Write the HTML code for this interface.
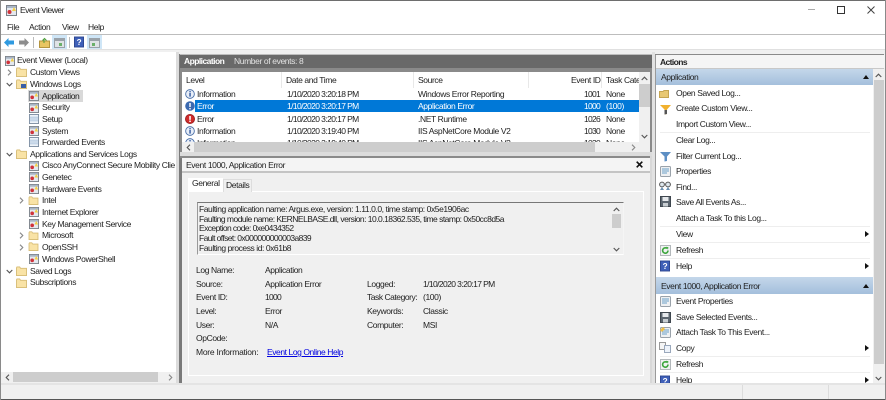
<!DOCTYPE html>
<html><head><meta charset="utf-8"><style>
html,body{margin:0;padding:0;width:886px;height:400px;overflow:hidden;background:#f0f0f0}
body{position:relative;font-family:"Liberation Sans",sans-serif;font-size:8.5px;letter-spacing:-.38px;color:#222}
.t{position:absolute;white-space:nowrap;line-height:12px;height:12px}
.n{letter-spacing:-.6px}
.i{letter-spacing:-.72px}
.b{position:absolute}
svg{position:absolute;overflow:visible}
</style></head><body>
<svg width="0" height="0" style="position:absolute"><defs>
<symbol id="log" viewBox="0 0 11 11"><rect x=".5" y=".5" width="10" height="10" fill="#e4e8ee" stroke="#7b8088"/><rect x="1" y="1" width="9" height="2" fill="#a9b6c6"/><circle cx="3.5" cy="7" r="2" fill="#d0323a"/><path d="M6 6l2-4 2 4z" fill="#f3cf45"/></symbol>
<symbol id="logp" viewBox="0 0 11 11"><rect x=".5" y=".5" width="10" height="10" fill="#eef3f9" stroke="#7b8ca0"/><path d="M1 3.5h9M1 5.5h9M1 7.5h9" stroke="#a8c0da"/></symbol>
<symbol id="fold" viewBox="0 0 12 11"><path d="M.5 2V10.5H11.5V2.5H5L4 1H1z" fill="#f9e3a6" stroke="#d6bb74"/></symbol>
<symbol id="info" viewBox="0 0 11 11"><circle cx="5.5" cy="5.5" r="4.8" fill="#e8eef8" stroke="#4a6fa8"/><rect x="4.8" y="4.4" width="1.5" height="4" fill="#28509a"/><rect x="4.8" y="2.3" width="1.5" height="1.4" fill="#28509a"/></symbol>
<symbol id="err" viewBox="0 0 11 11"><circle cx="5.5" cy="5.5" r="5" fill="#cf2b2b" stroke="#9e2222"/><rect x="4.7" y="2.2" width="1.7" height="4.2" fill="#fff"/><rect x="4.7" y="7.2" width="1.7" height="1.6" fill="#fff"/></symbol>
<symbol id="help" viewBox="0 0 11 12"><rect x=".5" y=".5" width="10" height="11" fill="#3f60b8" stroke="#2c4690"/><text x="5.5" y="9.2" font-size="9" font-weight="bold" text-anchor="middle" fill="#fff" font-family="Liberation Sans">?</text></symbol>
<symbol id="ref" viewBox="0 0 11 11"><rect x=".5" y=".5" width="10" height="10" fill="#f0f2f2" stroke="#b3b8bb"/><path d="M8 5.5a2.7 2.7 0 1 1-1-2.1" fill="none" stroke="#3aa53a" stroke-width="1.6"/><path d="M6 1.8l2.4.4-.4 2.4z" fill="#3aa53a"/></symbol>
<symbol id="funnel" viewBox="0 0 11 11"><path d="M0 1h11L7 5.5V10L4.5 10.5V5.5z" fill="currentColor"/></symbol>
<symbol id="prop" viewBox="0 0 11 11"><rect x=".5" y=".5" width="10" height="10" rx="1" fill="#eef0f2" stroke="#9aa2aa"/><path d="M2 3h7M2 5h7M2 7h5" stroke="#6aa0c8"/></symbol>
<symbol id="save" viewBox="0 0 11 11"><path d="M.5.5H10.5V10.5H.5z" fill="#5c6670" stroke="#3e464e"/><rect x="2.5" y="1" width="6" height="4" fill="#e6e9ec"/><rect x="3" y="7" width="5" height="3.5" fill="#c8ced2"/></symbol>
<symbol id="upa" viewBox="0 0 7 5"><path d="M.7 4L3.5 1.2 6.3 4" fill="none" stroke="#555" stroke-width="1.1"/></symbol>
<symbol id="dna" viewBox="0 0 7 5"><path d="M.7 1L3.5 3.8 6.3 1" fill="none" stroke="#555" stroke-width="1.1"/></symbol>
<symbol id="rta" viewBox="0 0 5 7"><path d="M1 .7L3.8 3.5 1 6.3" fill="none" stroke="#888" stroke-width="1.1"/></symbol>
<symbol id="lfa" viewBox="0 0 5 7"><path d="M4 .7L1.2 3.5 4 6.3" fill="none" stroke="#555" stroke-width="1.1"/></symbol>
</defs></svg>

<!-- window frame / title -->
<div class="b" style="left:0;top:0;width:886px;height:34px;background:#fff"></div>
<div class="b" style="left:0;top:0;width:886px;height:1px;background:#6e6e6e"></div>
<svg style="left:6px;top:5px" width="11" height="11"><use href="#log"/></svg>
<div class="t" style="left:20px;top:4px;letter-spacing:-.5px">Event Viewer</div>
<div class="b" style="left:808px;top:9px;width:7px;height:1px;background:#aaa"></div>
<div class="b" style="left:837px;top:6px;width:6px;height:6px;border:1px solid #333"></div>
<svg style="left:867px;top:6px" width="8" height="8"><path d="M.5.5L7.5 7.5M7.5.5L.5 7.5" stroke="#444"/></svg>
<div class="t" style="left:7px;top:21px">File</div>
<div class="t" style="left:29px;top:21px">Action</div>
<div class="t" style="left:62px;top:21px">View</div>
<div class="t" style="left:88px;top:21px">Help</div>
<div class="b" style="left:0;top:34px;width:886px;height:1px;background:#bdbdbd"></div>
<!-- toolbar -->
<div class="b" style="left:0;top:35px;width:886px;height:15px;background:#fff"></div>
<div class="b" style="left:0;top:49px;width:886px;height:1px;background:#e0e0e0"></div>
<svg style="left:4px;top:38px" width="10" height="9"><path d="M0 4.5L4.5 0V2.5H10V6.5H4.5V9z" fill="#2f9ae0"/></svg>
<svg style="left:19px;top:38px" width="10" height="9"><path d="M10 4.5L5.5 0V2.5H0V6.5H5.5V9z" fill="#8d8d8d"/></svg>
<div class="b" style="left:33px;top:37px;width:1px;height:11px;background:#bbb"></div>
<svg style="left:39px;top:38px" width="11" height="10"><path d="M.5 3V9.5H10.5V3z" fill="#e8c562" stroke="#b5953f"/><path d="M5 5V1M3.5 2.5L5.5 .5 7.5 2.5" stroke="#4d9e3a" fill="none"/></svg>
<div class="b" style="left:52px;top:35px;width:15px;height:14px;background:#cfe6f7"></div>
<svg style="left:54px;top:38px" width="11" height="10"><rect x=".5" y=".5" width="10" height="9" fill="#dfe3e6" stroke="#9aa2a9"/><rect x="1" y="1" width="9" height="2" fill="#9aa2a9"/><rect x="5" y="5" width="3" height="3" fill="#6ab06a"/></svg>
<div class="b" style="left:69px;top:37px;width:1px;height:11px;background:#bbb"></div>
<svg style="left:74px;top:36px" width="10" height="12"><use href="#help"/></svg>
<div class="b" style="left:87px;top:35px;width:15px;height:14px;background:#cfe6f7"></div>
<svg style="left:89px;top:38px" width="11" height="10"><rect x=".5" y=".5" width="10" height="9" fill="#dfe3e6" stroke="#9aa2a9"/><rect x="1" y="1" width="9" height="2" fill="#9aa2a9"/><rect x="3" y="5" width="3" height="3" fill="#6ab06a"/></svg>

<!-- left pane -->
<div class="b" style="left:1px;top:52px;width:175px;height:331px;background:#fff"></div>
<div class="b" style="left:0;top:51px;width:1px;height:333px;background:#8a8a8a"></div>
<div class="b" style="left:176px;top:52px;width:3px;height:332px;background:#dcdcdc"></div>
<div class="b" style="left:179px;top:54px;width:2px;height:330px;background:#7a7a7a"></div>
<svg style="left:5px;top:56px" width="10" height="10"><use href="#log"/></svg>
<div class="t" style="left:17px;top:54px">Event Viewer (Local)</div>

<svg style="left:7px;top:69px" width="5" height="7"><use href="#rta"/></svg>
<svg style="left:16px;top:67px" width="11" height="10"><use href="#fold"/></svg><div class="t" style="left:30px;top:66px">Custom Views</div>
<svg style="left:6px;top:82px" width="7" height="5"><use href="#dna"/></svg>
<svg style="left:16px;top:79px" width="11" height="10"><use href="#fold"/></svg><div class="b" style="left:21px;top:84px;width:5px;height:4px;background:#3a5fa8"></div><div class="t" style="left:30px;top:78px">Windows Logs</div>

<div class="b" style="left:28px;top:90px;width:55px;height:12px;background:#d9d9d9"></div>
<svg style="left:29px;top:91px" width="10" height="10"><use href="#log"/></svg><div class="t" style="left:42px;top:90px">Application</div>
<svg style="left:29px;top:103px" width="10" height="10"><use href="#log"/></svg><div class="t" style="left:42px;top:101px">Security</div>
<svg style="left:29px;top:114px" width="10" height="10"><use href="#logp"/></svg><div class="t" style="left:42px;top:113px">Setup</div>
<svg style="left:29px;top:126px" width="10" height="10"><use href="#log"/></svg><div class="t" style="left:42px;top:125px">System</div>
<svg style="left:29px;top:137px" width="10" height="10"><use href="#logp"/></svg><div class="t" style="left:42px;top:136px">Forwarded Events</div>
<svg style="left:6px;top:152px" width="7" height="5"><use href="#dna"/></svg>
<svg style="left:16px;top:149px" width="11" height="10"><use href="#fold"/></svg><div class="t" style="left:30px;top:148px">Applications and Services Logs</div>
<svg style="left:29px;top:161px" width="10" height="10"><use href="#log"/></svg><div class="t" style="left:42px;top:159px;width:133px;overflow:hidden">Cisco AnyConnect Secure Mobility Client</div>
<svg style="left:29px;top:172px" width="10" height="10"><use href="#log"/></svg><div class="t" style="left:42px;top:171px">Genetec</div>
<svg style="left:29px;top:184px" width="10" height="10"><use href="#log"/></svg><div class="t" style="left:42px;top:183px">Hardware Events</div>
<svg style="left:19px;top:197px" width="5" height="7"><use href="#rta"/></svg>
<svg style="left:28px;top:196px" width="11" height="9"><use href="#fold"/></svg><div class="t" style="left:42px;top:194px">Intel</div>
<svg style="left:29px;top:207px" width="10" height="10"><use href="#log"/></svg><div class="t" style="left:42px;top:206px">Internet Explorer</div>
<svg style="left:29px;top:219px" width="10" height="10"><use href="#log"/></svg><div class="t" style="left:42px;top:218px">Key Management Service</div>
<svg style="left:19px;top:232px" width="5" height="7"><use href="#rta"/></svg>
<svg style="left:28px;top:231px" width="11" height="9"><use href="#fold"/></svg><div class="t" style="left:42px;top:229px">Microsoft</div>
<svg style="left:19px;top:244px" width="5" height="7"><use href="#rta"/></svg>
<svg style="left:28px;top:242px" width="11" height="9"><use href="#fold"/></svg><div class="t" style="left:42px;top:241px">OpenSSH</div>
<svg style="left:29px;top:254px" width="10" height="10"><use href="#log"/></svg><div class="t" style="left:42px;top:253px">Windows PowerShell</div>
<svg style="left:6px;top:269px" width="7" height="5"><use href="#dna"/></svg>
<svg style="left:16px;top:266px" width="11" height="10"><use href="#fold"/></svg><div class="t" style="left:30px;top:265px">Saved Logs</div>
<svg style="left:16px;top:278px" width="11" height="10"><use href="#fold"/></svg><div class="t" style="left:30px;top:276px">Subscriptions</div>
<!-- left h-scroll -->
<div class="b" style="left:1px;top:372px;width:175px;height:11px;background:#f0f0f0"></div>
<div class="b" style="left:13px;top:372px;width:145px;height:10px;background:#cdcdcd"></div>
<svg style="left:5px;top:374px" width="5" height="7"><use href="#lfa"/></svg>
<svg style="left:168px;top:374px" width="5" height="7"><use href="#rta"/></svg>

<!-- centre -->
<div class="b" style="left:180px;top:54px;width:472px;height:1px;background:#bdbdbd"></div>
<div class="b" style="left:180px;top:55px;width:472px;height:13px;background:#696969"></div>
<div class="t" style="left:184px;top:55px;color:#fff;font-weight:bold;letter-spacing:-.55px">Application</div>
<div class="t" style="left:234px;top:55px;color:#e2e2e2">Number of events: 8</div>
<div class="b" style="left:180px;top:68px;width:472px;height:84px;background:#8a8a8a"></div>
<div class="b" style="left:182px;top:72px;width:468px;height:70px;background:#fff"></div>
<div class="b" style="left:281px;top:72px;width:1px;height:16px;background:#e8e8e8"></div>
<div class="b" style="left:413px;top:72px;width:1px;height:16px;background:#e8e8e8"></div>
<div class="b" style="left:528px;top:72px;width:1px;height:16px;background:#e8e8e8"></div>
<div class="b" style="left:601px;top:72px;width:1px;height:16px;background:#e8e8e8"></div>
<div class="t" style="left:186px;top:74px">Level</div>
<div class="t" style="left:286px;top:74px">Date and Time</div>
<div class="t" style="left:418px;top:74px">Source</div>
<div class="t" style="left:571px;top:74px">Event ID</div>
<div class="t" style="left:606px;top:74px;width:33px;overflow:hidden">Task Category</div>
<!-- rows -->
<svg style="left:185px;top:89px" width="10" height="10"><use href="#info"/></svg>
<div class="t" style="left:197px;top:88px">Information</div><div class="t n" style="left:287px;top:88px">1/10/2020 3:20:18 PM</div><div class="t" style="left:418px;top:88px">Windows Error Reporting</div><div class="t i" style="left:584px;top:88px">1001</div><div class="t" style="left:606px;top:88px">None</div>
<div class="b" style="left:195px;top:100px;width:444px;height:12px;background:#0078d7"></div>
<svg style="left:185px;top:101px" width="10" height="10"><circle cx="5" cy="5" r="4.8" fill="#3b69b0"/><rect x="4.2" y="2" width="1.6" height="4" fill="#e8eef8"/><rect x="4.2" y="7" width="1.6" height="1.4" fill="#e8eef8"/></svg>
<div class="t" style="left:197px;top:100px;color:#fff">Error</div><div class="t n" style="left:287px;top:100px;color:#fff">1/10/2020 3:20:17 PM</div><div class="t" style="left:418px;top:100px;color:#fff">Application Error</div><div class="t i" style="left:584px;top:100px;color:#fff">1000</div><div class="t" style="left:606px;top:100px;color:#fff">(100)</div>
<svg style="left:185px;top:114px" width="10" height="10"><use href="#err"/></svg>
<div class="t" style="left:197px;top:113px">Error</div><div class="t n" style="left:287px;top:113px">1/10/2020 3:20:17 PM</div><div class="t" style="left:418px;top:113px">.NET Runtime</div><div class="t i" style="left:584px;top:113px">1026</div><div class="t" style="left:606px;top:113px">None</div>
<svg style="left:185px;top:126px" width="10" height="10"><use href="#info"/></svg>
<div class="t" style="left:197px;top:125px">Information</div><div class="t n" style="left:287px;top:125px">1/10/2020 3:19:40 PM</div><div class="t" style="left:418px;top:125px">IIS AspNetCore Module V2</div><div class="t i" style="left:584px;top:125px">1030</div><div class="t" style="left:606px;top:125px">None</div>
<div class="b" style="left:182px;top:137px;width:457px;height:5px;overflow:hidden">
<svg style="left:3px;top:1px" width="10" height="10"><use href="#info"/></svg>
<div class="t" style="left:15px;top:0">Information</div><div class="t n" style="left:105px;top:0">1/10/2020 3:19:40 PM</div><div class="t" style="left:236px;top:0">IIS AspNetCore Module V2</div><div class="t i" style="left:402px;top:0">1030</div><div class="t" style="left:424px;top:0">None</div></div>
<!-- list scrollbars -->
<div class="b" style="left:639px;top:72px;width:11px;height:70px;background:#f0f0f0"></div>
<div class="b" style="left:639px;top:84px;width:11px;height:23px;background:#cdcdcd"></div>
<svg style="left:641px;top:76px" width="7" height="5"><use href="#upa"/></svg>
<svg style="left:641px;top:134px" width="7" height="5"><use href="#dna"/></svg>
<div class="b" style="left:182px;top:142px;width:468px;height:10px;background:#f0f0f0"></div>
<div class="b" style="left:194px;top:142px;width:401px;height:10px;background:#cdcdcd"></div>
<svg style="left:186px;top:144px" width="5" height="7"><use href="#lfa"/></svg>
<svg style="left:631px;top:144px" width="5" height="7"><use href="#rta"/></svg>
<!-- details -->
<div class="b" style="left:180px;top:152px;width:472px;height:5px;background:#dcdcdc"></div>
<div class="b" style="left:180px;top:156px;width:472px;height:228px;background:#f0f0f0"></div>
<div class="b" style="left:180px;top:156px;width:2px;height:228px;background:#7a7a7a"></div>
<div class="b" style="left:180px;top:156px;width:472px;height:2px;background:#8a8a8a"></div>
<div class="b" style="left:182px;top:158px;width:470px;height:13px;background:#f4f4f4"></div>
<div class="b" style="left:182px;top:171px;width:470px;height:2px;background:#c4c4c4"></div>
<div class="t" style="left:186px;top:159px">Event 1000, Application Error</div>
<svg style="left:636px;top:161px" width="7" height="7"><path d="M.7.7L6.3 6.3M6.3.7L.7 6.3" stroke="#111" stroke-width="1.6"/></svg>
<div class="b" style="left:650px;top:156px;width:2px;height:228px;background:#d8d8d8"></div>
<!-- tab panel -->
<div class="b" style="left:188px;top:191px;width:454px;height:183px;background:#f0f0f0;border:1px solid #fff"></div>
<div class="b" style="left:188px;top:178px;width:35px;height:14px;background:#fff"></div>
<div class="b" style="left:223px;top:179px;width:29px;height:13px;background:#f0f0f0;border:1px solid #ddd;border-bottom:0;box-sizing:border-box"></div>
<div class="t" style="left:192px;top:177px">General</div>
<div class="t" style="left:226px;top:179px">Details</div>
<!-- message box -->
<div class="b" style="left:197px;top:202px;width:425px;height:51px;background:#f0f0f0;border-top:1px solid #777;border-left:1px solid #999;border-bottom:1px solid #fff;border-right:1px solid #f5f5f5"></div>
<div class="t" style="left:199px;top:203px;letter-spacing:-.43px">Faulting application name: Argus.exe, version: 1.11.0.0, time stamp: 0x5e1906ac</div>
<div class="t" style="left:199px;top:213px;letter-spacing:-.52px">Faulting module name: KERNELBASE.dll, version: 10.0.18362.535, time stamp: 0x50cc8d5a</div>
<div class="t" style="left:199px;top:222px;letter-spacing:-.58px">Exception code: 0xe0434352</div>
<div class="t" style="left:199px;top:232px;letter-spacing:-.6px">Fault offset: 0x000000000003a839</div>
<div class="t" style="left:199px;top:242px;letter-spacing:-.44px">Faulting process id: 0x61b8</div>
<div class="b" style="left:612px;top:214px;width:9px;height:14px;background:#cdcdcd"></div>
<svg style="left:613px;top:207px" width="7" height="5"><use href="#upa"/></svg>
<svg style="left:613px;top:247px" width="7" height="5"><use href="#dna"/></svg>
<!-- fields -->
<div class="t" style="left:196px;top:264px">Log Name:</div><div class="t" style="left:265px;top:264px">Application</div>
<div class="t" style="left:196px;top:278px">Source:</div><div class="t" style="left:265px;top:278px">Application Error</div><div class="t" style="left:367px;top:278px">Logged:</div><div class="t n" style="left:423px;top:278px">1/10/2020 3:20:17 PM</div>
<div class="t" style="left:196px;top:291px">Event ID:</div><div class="t i" style="left:265px;top:291px">1000</div><div class="t" style="left:367px;top:291px;letter-spacing:-.47px">Task Category:</div><div class="t" style="left:423px;top:291px">(100)</div>
<div class="t" style="left:196px;top:305px">Level:</div><div class="t" style="left:265px;top:305px">Error</div><div class="t" style="left:367px;top:305px">Keywords:</div><div class="t" style="left:423px;top:305px">Classic</div>
<div class="t" style="left:196px;top:319px">User:</div><div class="t" style="left:265px;top:319px">N/A</div><div class="t" style="left:367px;top:319px">Computer:</div><div class="t" style="left:423px;top:319px">MSI</div>
<div class="t" style="left:196px;top:332px">OpCode:</div>
<div class="t" style="left:196px;top:346px;letter-spacing:-.25px">More Information:</div><div class="t" style="left:267px;top:346px;color:#0000e0;text-decoration:underline;letter-spacing:-.43px">Event Log Online Help</div>

<!-- actions -->
<div class="b" style="left:652px;top:52px;width:3px;height:332px;background:#e2e2e2"></div>
<div class="b" style="left:655px;top:54px;width:229px;height:1px;background:#8a8a8a"></div>
<div class="b" style="left:655px;top:55px;width:230px;height:13px;background:#f5f5f5"></div>
<div class="t" style="left:660px;top:56px;font-weight:bold;letter-spacing:-.6px">Actions</div>
<div class="b" style="left:655px;top:55px;width:1px;height:329px;background:#9a9a9a"></div>
<div class="b" style="left:656px;top:68px;width:228px;height:315px;background:#fff"></div>
<div class="b" style="left:656px;top:68px;width:228px;height:1px;background:#c8c8c8"></div>
<div class="b" style="left:656px;top:69px;width:217px;height:16px;background:linear-gradient(#c4d7ea,#a4bfdc)"></div>
<div class="t" style="left:661px;top:71px">Application</div>
<svg style="left:863px;top:75px" width="6" height="4"><path d="M0 4L3 0 6 4z" fill="#111"/></svg>
<!-- actions scrollbar -->
<div class="b" style="left:873px;top:69px;width:11px;height:314px;background:#f0f0f0"></div>
<div class="b" style="left:874px;top:80px;width:10px;height:284px;background:#cdcdcd"></div>
<svg style="left:875px;top:73px" width="7" height="5"><use href="#upa"/></svg>
<svg style="left:875px;top:376px" width="7" height="5"><use href="#dna"/></svg>
<!-- action items -->
<svg style="left:659px;top:89px" width="11" height="9"><path d="M.5 2.5H4L5 1.5H9.5V8.5H.5z" fill="#e8c873" stroke="#c5a552"/></svg>
<div class="t" style="left:676px;top:87px">Open Saved Log...</div>
<svg style="left:660px;top:104px" width="11" height="11"><path d="M0 1h11L7 5.5V10L4.5 10.5V5.5z" fill="#f1b12e"/><path d="M4.5 6h2.5v4l-2.5.5z" fill="#555"/></svg>
<div class="t" style="left:676px;top:102px">Create Custom View...</div>
<div class="t" style="left:676px;top:118px">Import Custom View...</div>
<div class="b" style="left:660px;top:132px;width:210px;height:1px;background:#eee"></div>
<div class="t" style="left:676px;top:134px">Clear Log...</div>
<svg style="left:660px;top:151px;color:#5d8fc4" width="11" height="11"><use href="#funnel"/></svg>
<div class="t" style="left:676px;top:150px">Filter Current Log...</div>
<svg style="left:660px;top:166px" width="11" height="11"><use href="#prop"/></svg>
<div class="t" style="left:676px;top:165px">Properties</div>
<svg style="left:659px;top:181px" width="12" height="11"><circle cx="3" cy="3.5" r="2.4" fill="#dfe8ee" stroke="#555"/><circle cx="9" cy="3.5" r="2.4" fill="#dfe8ee" stroke="#555"/><path d="M1 9L3 6l2 3zM7 9l2-3 2 3z" fill="#6a8fb0"/></svg>
<div class="t" style="left:676px;top:181px">Find...</div>
<svg style="left:660px;top:196px" width="11" height="11"><use href="#save"/></svg>
<div class="t" style="left:676px;top:196px">Save All Events As...</div>
<div class="t" style="left:676px;top:212px">Attach a Task To this Log...</div>
<div class="b" style="left:660px;top:226px;width:210px;height:1px;background:#eee"></div>
<div class="t" style="left:676px;top:228px">View</div>
<svg style="left:865px;top:231px" width="4" height="6"><path d="M0 0L4 3 0 6z" fill="#111"/></svg>
<div class="b" style="left:660px;top:242px;width:210px;height:1px;background:#eee"></div>
<svg style="left:660px;top:245px" width="11" height="11"><use href="#ref"/></svg>
<div class="t" style="left:676px;top:244px">Refresh</div>
<div class="b" style="left:660px;top:258px;width:210px;height:1px;background:#eee"></div>
<svg style="left:660px;top:260px" width="10" height="12"><use href="#help"/></svg>
<div class="t" style="left:676px;top:260px">Help</div>
<svg style="left:865px;top:263px" width="4" height="6"><path d="M0 0L4 3 0 6z" fill="#111"/></svg>
<div class="b" style="left:656px;top:277px;width:217px;height:17px;background:linear-gradient(#c4d7ea,#a4bfdc)"></div>
<div class="t" style="left:661px;top:280px">Event 1000, Application Error</div>
<svg style="left:863px;top:284px" width="6" height="4"><path d="M0 4L3 0 6 4z" fill="#111"/></svg>
<svg style="left:660px;top:296px" width="11" height="11"><use href="#prop"/></svg>
<div class="t" style="left:676px;top:295px">Event Properties</div>
<svg style="left:660px;top:312px" width="11" height="11"><use href="#save"/></svg>
<div class="t" style="left:676px;top:311px">Save Selected Events...</div>
<svg style="left:660px;top:327px" width="11" height="11"><use href="#prop"/><path d="M0 3L3 0 5 2 2 5z" fill="#eebf4a"/></svg>
<div class="t" style="left:676px;top:326px">Attach Task To This Event...</div>
<svg style="left:659px;top:342px" width="12" height="11"><rect x=".5" y=".5" width="6" height="7" fill="#f5f5f5" stroke="#999"/><rect x="5.5" y="3.5" width="6" height="7" fill="#eef3fa" stroke="#9aa8bc"/></svg>
<div class="t" style="left:676px;top:342px">Copy</div>
<svg style="left:865px;top:345px" width="4" height="6"><path d="M0 0L4 3 0 6z" fill="#111"/></svg>
<div class="b" style="left:660px;top:356px;width:210px;height:1px;background:#eee"></div>
<svg style="left:660px;top:359px" width="11" height="11"><use href="#ref"/></svg>
<div class="t" style="left:676px;top:358px">Refresh</div>
<div class="b" style="left:660px;top:372px;width:210px;height:1px;background:#eee"></div>
<svg style="left:660px;top:375px" width="10" height="12"><use href="#help"/></svg>
<div class="t" style="left:676px;top:374px">Help</div>
<svg style="left:865px;top:377px" width="4" height="6"><path d="M0 0L4 3 0 6z" fill="#111"/></svg>

<!-- status bar -->
<div class="b" style="left:0;top:383px;width:886px;height:2px;background:#e4e4e4"></div>
<div class="b" style="left:1px;top:385px;width:884px;height:14px;background:#f0f0f0"></div>
<div class="b" style="left:742px;top:385px;width:1px;height:14px;background:#dcdcdc"></div>
<div class="b" style="left:828px;top:385px;width:1px;height:14px;background:#dcdcdc"></div>
<div class="b" style="left:0;top:399px;width:886px;height:1px;background:#555"></div>
<div class="b" style="left:885px;top:0;width:1px;height:400px;background:#8a8a8a"></div>
<div class="b" style="left:0;top:0;width:1px;height:400px;background:#8a8a8a"></div>
</body></html>
